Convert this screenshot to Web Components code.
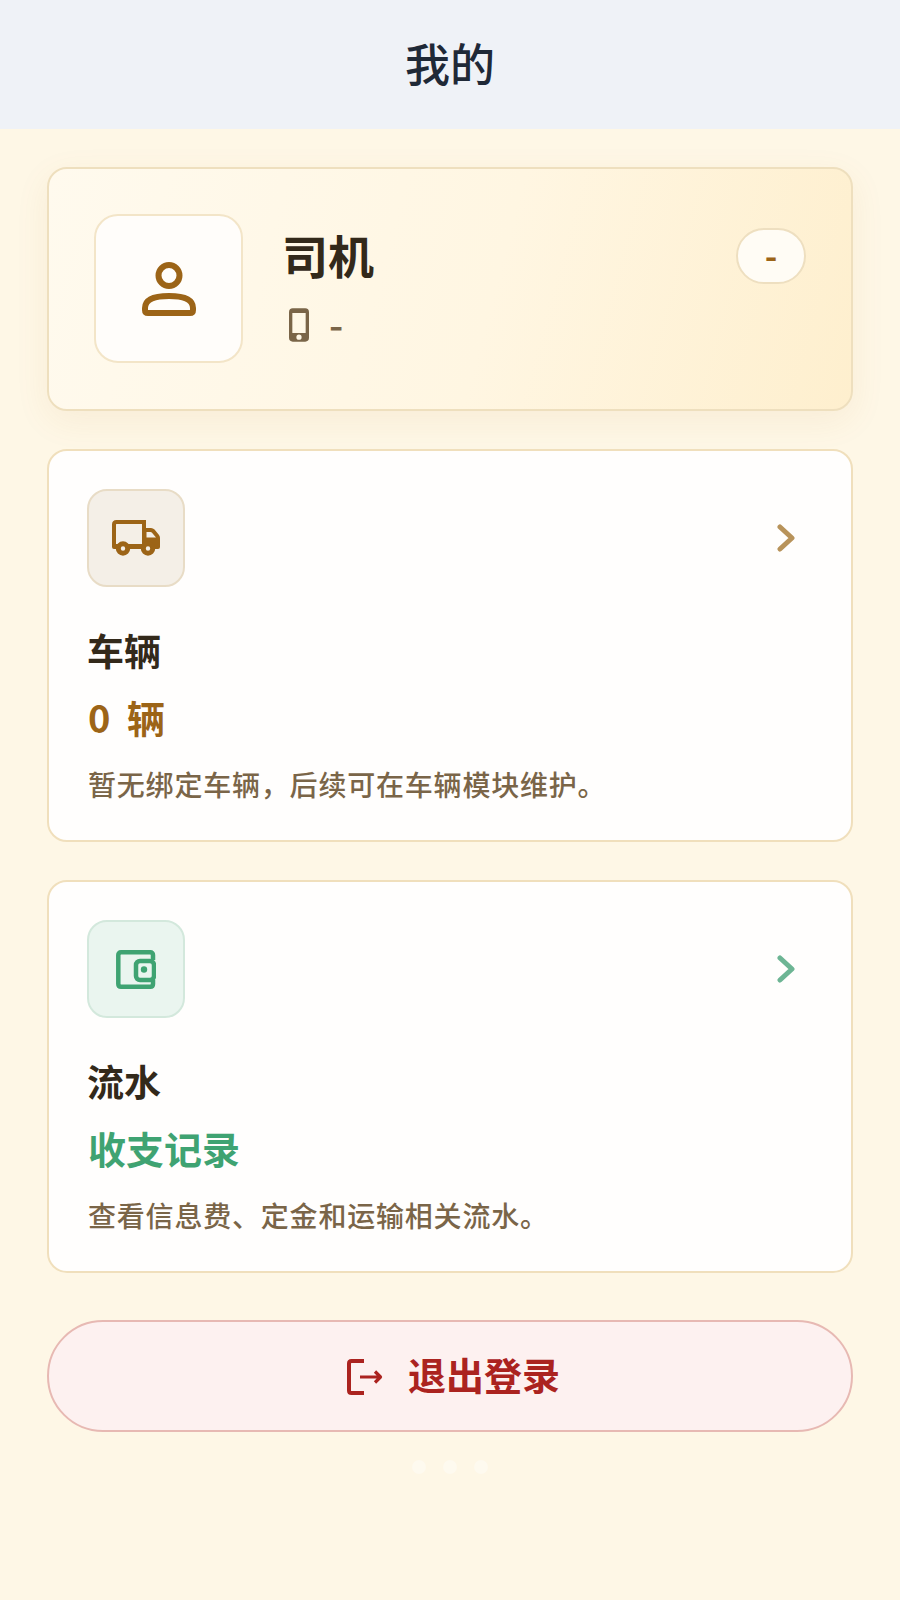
<!DOCTYPE html>
<html lang="zh">
<head>
<meta charset="utf-8">
<title>我的</title>
<style>
  html, body { margin: 0; padding: 0; }
  body {
    width: 900px;
    min-height: 1600px;
    background: #fef7e6;
    font-family: "Noto Sans CJK SC", "Noto Sans", sans-serif;
  }
</style>
</head>
<body>
<page-header>我的</page-header>
<page-body>
  <profile-card name="司机" phone="-" badge="-"></profile-card>
  <entry-card theme="brown">
    <svg slot="icon" width="48" height="36" viewBox="0 0 48 36">
      <path d="M2 27V4.500Q2 2 4.500 2H32V27" fill="none" stroke="#9c6417" stroke-width="4"/>
      <path d="M0 24H8V29H2Q0 29 0 27ZM16 24H32V29H16Z" fill="#9c6417"/>
      <path fill-rule="evenodd" fill="#9c6417" d="M31 8H39Q41 8 42.500 9.500L47 15Q48 16.500 48 18V27Q48 29 46 29H31ZM34.500 12V17.500H44L40 12.800Q39.500 12 38.500 12Z"/>
      <circle cx="11" cy="28.500" r="4.700" fill="#f4efe7" stroke="#9c6417" stroke-width="5"/>
      <circle cx="36" cy="28.500" r="4.700" fill="#f4efe7" stroke="#9c6417" stroke-width="5"/>
    </svg>
    <span slot="title">车辆</span>
    <span slot="value">0 辆</span>
    <span slot="desc">暂无绑定车辆&#xFF0C;后续可在车辆模块维护。</span>
  </entry-card>
  <entry-card theme="green">
    <svg slot="icon" width="40" height="39" viewBox="0 0 40 39" fill="none" stroke="#3fa372" stroke-width="4.500">
      <path d="M37 10V5Q37 2.300 34.300 2.300H5Q2.300 2.300 2.300 5V34Q2.300 36.700 5 36.700H34.300Q37 36.700 37 34V30"/>
      <rect x="20" y="11" width="18" height="19" rx="4"/>
      <circle cx="28" cy="19.500" r="3.200" fill="#3fa372" stroke="none"/>
    </svg>
    <span slot="title">流水</span>
    <span slot="value">收支记录</span>
    <span slot="desc">查看信息费、定金和运输相关流水。</span>
  </entry-card>
  <logout-button>退出登录</logout-button>
  <page-dots></page-dots>
</page-body>

<script>
class PageHeader extends HTMLElement {
    constructor() {
        super();
        this.attachShadow({ mode: "open" });
        this.shadowRoot.innerHTML = `
            <style>
                :host {
                    display: flex;
                    box-sizing: border-box;
                    height: 129px;
                    padding-bottom: 4px;
                    align-items: center;
                    justify-content: center;
                    background: #eff2f7;
                    color: #1f2937;
                    font-size: 45px;
                    font-weight: 500;
                    line-height: 1;
                }
            </style>
            <slot></slot>
        `;
    }
}

class PageBody extends HTMLElement {
    constructor() {
        super();
        this.attachShadow({ mode: "open" });
        this.shadowRoot.innerHTML = `
            <style>
                :host {
                    display: flex;
                    flex-direction: column;
                    gap: 38px;
                    padding: 38px 47px 0;
                }
            </style>
            <slot></slot>
        `;
    }
}

class ProfileCard extends HTMLElement {
    constructor() {
        super();
        this.attachShadow({ mode: "open" });
    }

    connectedCallback() {
        const name = this.getAttribute("name");
        const phone = this.getAttribute("phone");
        const badge = this.getAttribute("badge");
        this.shadowRoot.innerHTML = `
            <style>
                :host {
                    display: flex;
                    box-sizing: border-box;
                    height: 244px;
                    padding: 45px 45px 0 45px;
                    border: 2px solid #eedfbe;
                    border-radius: 20px;
                    background: linear-gradient(105deg, #fffaee 0%, #fff6e2 55%, #feefce 100%);
                    box-shadow: 0 10px 34px rgba(176, 118, 32, 0.08);
                }
                .avatar {
                    flex: none;
                    display: flex;
                    align-items: center;
                    justify-content: center;
                    box-sizing: border-box;
                    width: 149px;
                    height: 149px;
                    border: 2px solid #f3e5c8;
                    border-radius: 24px;
                    background: #fffdfa;
                }
                .info {
                    flex: 1;
                    margin-left: 39px;
                    padding-top: 10px;
                }
                .name {
                    color: #33291a;
                    font-size: 46px;
                    font-weight: 700;
                    line-height: 60px;
                }
                .phone {
                    display: flex;
                    align-items: center;
                    gap: 20px;
                    margin: 24px 0 0 7px;
                    color: #7a6548;
                    font-size: 40px;
                    font-weight: 500;
                    line-height: 36px;
                }
                .phone span {
                    margin-top: -4px;
                }
                .badge {
                    flex: none;
                    display: flex;
                    align-items: center;
                    justify-content: center;
                    box-sizing: border-box;
                    width: 70px;
                    height: 56px;
                    margin-top: 14px;
                    padding-bottom: 4px;
                    border: 2px solid #eedfc0;
                    border-radius: 28px;
                    background: #fffcf5;
                    color: #9c6417;
                    font-size: 34px;
                    font-weight: 700;
                }
            </style>
            <div class="avatar">
                <svg width="54" height="54" viewBox="0 0 54 54" fill="none" stroke="#9c6417" stroke-width="6">
                    <circle cx="27" cy="13.500" r="10.500"/>
                    <path d="M3 46Q3 34 27 34T51 46V48Q51 51 48 51H6Q3 51 3 48Z" stroke-linejoin="round"/>
                </svg>
            </div>
            <div class="info">
                <div class="name">${name}</div>
                <div class="phone">
                    <svg width="20" height="34" viewBox="0 0 21 35">
                        <path fill="#7a6548" fill-rule="evenodd" d="M4 0H17Q21 0 21 4V31Q21 35 17 35H4Q0 35 0 31V4Q0 0 4 0ZM3.500 5V26H17.500V5ZM10.500 27.500A2.700 2.700 0 1 0 10.500 33A2.700 2.700 0 1 0 10.500 27.500Z"/>
                    </svg>
                    <span>${phone}</span>
                </div>
            </div>
            <div class="badge">${badge}</div>
        `;
    }
}

const ENTRY_THEMES = {
    brown: { bg: "#f4efe7", line: "#e8dcc6", value: "#9c6417", arrow: "#b8935a" },
    green: { bg: "#eaf5ef", line: "#d3e8dc", value: "#3fa372", arrow: "#6db594" }
};

class EntryCard extends HTMLElement {
    constructor() {
        super();
        this.attachShadow({ mode: "open" });
    }

    connectedCallback() {
        const theme = ENTRY_THEMES[this.getAttribute("theme")];
        this.shadowRoot.innerHTML = `
            <style>
                :host {
                    display: block;
                    box-sizing: border-box;
                    height: 393px;
                    padding: 38px 38px 0;
                    border: 2px solid #f0dfbc;
                    border-radius: 20px;
                    background: #fffefd;
                }
                .top {
                    display: flex;
                    align-items: center;
                    justify-content: space-between;
                }
                .icon {
                    display: flex;
                    align-items: center;
                    justify-content: center;
                    box-sizing: border-box;
                    width: 98px;
                    height: 98px;
                    border: 2px solid ${theme.line};
                    border-radius: 20px;
                    background: ${theme.bg};
                }
                .arrow {
                    margin-right: 18px;
                }
                .title {
                    margin-top: 38px;
                    color: #33291a;
                    font-size: 37px;
                    font-weight: 700;
                    line-height: 50px;
                }
                .value {
                    margin: 17px 0 0 1px;
                    color: ${theme.value};
                    font-size: 38px;
                    font-weight: 700;
                    line-height: 50px;
                    word-spacing: 8px;
                }
                .desc {
                    margin: 22px 0 0 1px;
                    color: #7a6548;
                    font-size: 28px;
                    font-weight: 500;
                    letter-spacing: 0.8px;
                    line-height: 40px;
                }
            </style>
            <div class="top">
                <div class="icon"><slot name="icon"></slot></div>
                <svg class="arrow" width="18" height="28" viewBox="0 0 18 28" fill="none" stroke="${theme.arrow}" stroke-width="5" stroke-linecap="round" stroke-linejoin="round">
                    <path d="M3 3L15 14L3 25"/>
                </svg>
            </div>
            <div class="title"><slot name="title"></slot></div>
            <div class="value"><slot name="value"></slot></div>
            <div class="desc"><slot name="desc"></slot></div>
        `;
    }
}

class LogoutButton extends HTMLElement {
    constructor() {
        super();
        this.attachShadow({ mode: "open" });
        this.shadowRoot.innerHTML = `
            <style>
                :host {
                    display: flex;
                    align-items: center;
                    justify-content: center;
                    gap: 25px;
                    box-sizing: border-box;
                    height: 112px;
                    margin-top: 9px;
                    padding: 0 0 6px 5px;
                    border: 2px solid #e7b9b3;
                    border-radius: 56px;
                    background: #fdf1f0;
                    color: #ab231f;
                    font-size: 38px;
                    font-weight: 700;
                }
                svg {
                    margin: 7px 0 0 2px;
                }
            </style>
            <svg width="36" height="36" viewBox="0 0 36 36" fill="none" stroke="#ab231f" stroke-linejoin="round">
                <path d="M17 2H4.500Q2 2 2 4.500V31.500Q2 34 4.500 34H17" stroke-width="4"/>
                <path d="M13 18H33M28 12.500L33.500 18L28 23.500" stroke-width="3.200"/>
            </svg>
            <slot></slot>
        `;
    }
}

class PageDots extends HTMLElement {
    constructor() {
        super();
        this.attachShadow({ mode: "open" });
        this.shadowRoot.innerHTML = `
            <style>
                :host {
                    display: flex;
                    justify-content: center;
                    align-items: center;
                    gap: 17px;
                    margin-top: -10px;
                }
                i {
                    width: 14px;
                    height: 14px;
                    border-radius: 50%;
                    background: rgba(255, 255, 255, 0.35);
                }
                i:first-child {
                    background: #fffefb;
                }
            </style>
            <i></i><i></i><i></i>
        `;
    }
}

customElements.define("page-header", PageHeader);
customElements.define("page-body", PageBody);
customElements.define("profile-card", ProfileCard);
customElements.define("entry-card", EntryCard);
customElements.define("logout-button", LogoutButton);
customElements.define("page-dots", PageDots);
</script>
</body>
</html>
